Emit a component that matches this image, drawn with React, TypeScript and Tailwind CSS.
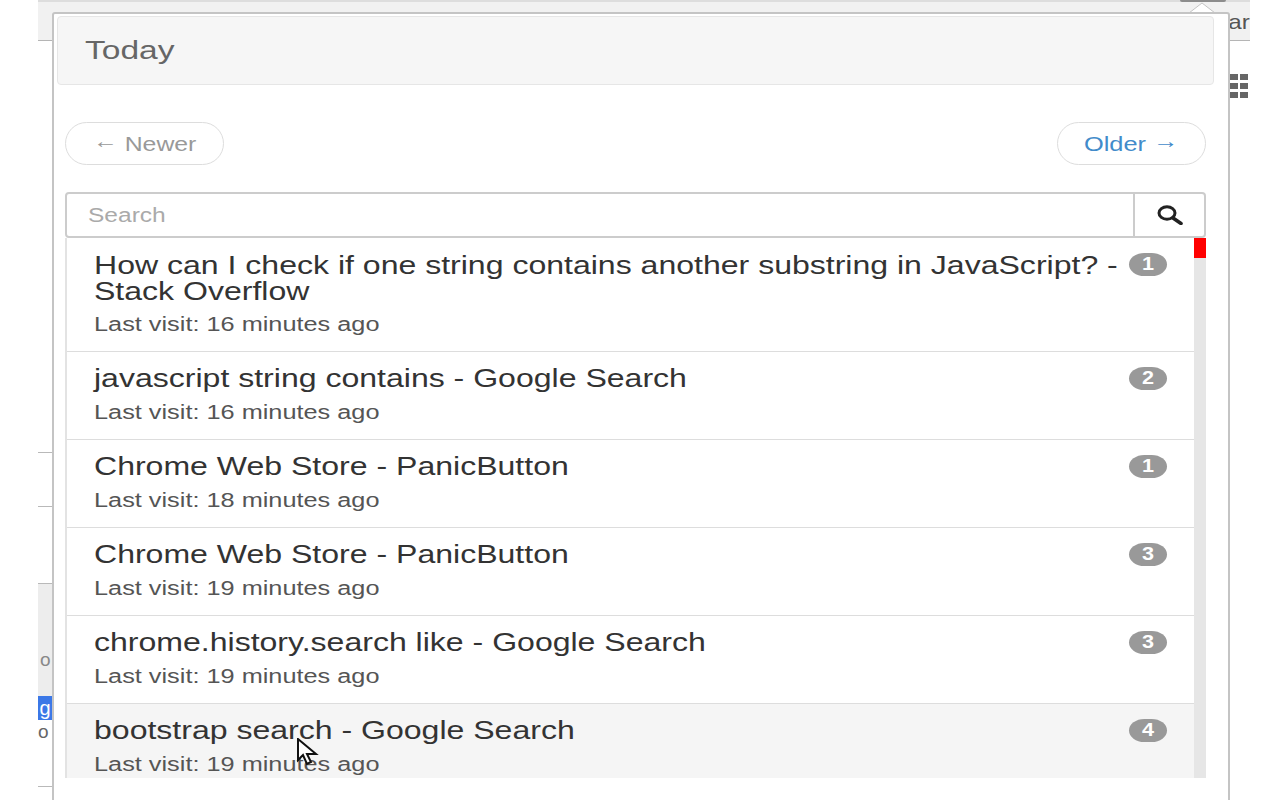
import React from "react";

interface HistoryItem {
  title: string;
  visit: string;
  count: number;
}

const items: HistoryItem[] = [
  {
    title: "How can I check if one string contains another substring in JavaScript? - Stack Overflow",
    visit: "Last visit: 16 minutes ago",
    count: 1,
  },
  { title: "javascript string contains - Google Search", visit: "Last visit: 16 minutes ago", count: 2 },
  { title: "Chrome Web Store - PanicButton", visit: "Last visit: 18 minutes ago", count: 1 },
  { title: "Chrome Web Store - PanicButton", visit: "Last visit: 19 minutes ago", count: 3 },
  { title: "chrome.history.search like - Google Search", visit: "Last visit: 19 minutes ago", count: 3 },
  { title: "bootstrap search - Google Search", visit: "Last visit: 19 minutes ago", count: 4 },
];

const App: React.FC = () => {
  return (
    <div className="relative h-[800px] w-[1280px] overflow-hidden bg-white font-['Liberation_Sans',sans-serif]">
      {/* page behind the popup */}
      <div className="mx-[38px] h-[800px] w-[1212px]">
        <div className="flex h-[41px] justify-end border-t-2 border-b border-t-[#dddddd] border-b-[#b5b5b5] bg-[#f1f1f1]">
          <span className="origin-right scale-x-[1.15] pt-[8px] text-[21px] leading-6 text-[#555555]">ar</span>
        </div>
        <div className="flex justify-end pt-[33px] pr-[2px]">
          <div className="grid grid-cols-2 gap-x-[2px] gap-y-[3px]">
            {[0, 1, 2, 3, 4, 5].map((i) => (
              <span key={i} className="h-[6px] w-[8px] bg-[#666666]" />
            ))}
          </div>
        </div>
        <div className="mt-[354px] w-[14px] border-t border-[#b9b9b9]" />
        <div className="mt-[53px] w-[14px] border-t border-[#b9b9b9]" />
        <div className="mt-[76px] h-[113px] w-[14px] overflow-hidden border-t border-[#b9b9b9] bg-[#ededed] text-[19px] leading-none text-[#888888]">
          <div className="pt-[66px] pl-[2px]">o</div>
        </div>
        <div className="h-[24px] w-[14px] overflow-hidden bg-[#3b78e7] text-center text-[20px] leading-6 text-white">g</div>
        <div className="h-[24px] w-[14px] overflow-hidden pt-[2px] text-[19px] leading-5 text-[#666666]">o</div>
        <div className="mt-[42px] w-[14px] border-t border-[#b9b9b9]" />
      </div>

      {/* popup arrow */}
      <svg className="absolute top-0 left-[1188px]" width="28" height="14" viewBox="0 0 28 14">
        <path d="M1 13 L14 3 L27 13" fill="#ffffff" stroke="#c4c4c4" strokeWidth="1" />
      </svg>
      <div className="absolute top-0 left-[1180px] h-[2px] w-[46px] rounded-b bg-[#8c8c8c]" />

      {/* popup */}
      <div className="absolute top-[12px] left-[52px] h-[800px] w-[1178px] rounded-t-[3px] border-2 border-[#c4c4c4] bg-white pt-[2px] pr-[14px] pl-[3px]">
        <div className="flex h-[69px] items-center rounded border border-[#e6e6e6] bg-[#f6f6f6] pl-[27px] text-[26px] text-[#666666]">
          <span className="inline-block origin-left scale-x-[1.29]">Today</span>
        </div>

        <div className="mt-[37px] flex justify-between px-[8px]">
          <span className="flex h-[43px] w-[159px] items-center justify-center rounded-full border border-[#dddddd] bg-white text-[20px] text-[#999999]">
            <span className="inline-block scale-x-[1.24]">
              <span className="inline-block -translate-y-[3px]">←</span> Newer
            </span>
          </span>
          <span className="flex h-[43px] w-[149px] items-center justify-center rounded-full border border-[#dddddd] bg-white text-[20px] text-[#428bca]">
            <span className="inline-block scale-x-[1.27]">
              Older <span className="inline-block -translate-y-[3px]">→</span>
            </span>
          </span>
        </div>

        <div className="mx-[8px] mt-[27px] flex h-[46px]">
          <div className="flex flex-1 items-center rounded-l border-2 border-[#cccccc] pl-[21px] text-[20px] text-[#aaaaaa]">
            <span className="inline-block origin-left scale-x-[1.226]">Search</span>
          </div>
          <div className="flex w-[71px] items-center justify-center rounded-r border-2 border-l-0 border-[#cccccc]">
            <svg width="26" height="20" viewBox="0 0 26 20" fill="none" stroke="#222222">
              <ellipse cx="10" cy="8" rx="8" ry="6.2" strokeWidth="3" />
              <path d="M16 13 L24 18.5" strokeWidth="3.6" strokeLinecap="round" />
            </svg>
          </div>
        </div>

        <div className="relative mx-[8px] flex h-[540px] overflow-hidden">
          <div className="flex-1 border-l-2 border-[#e3e3e3]">
            {items.map((item, i) => (
              <div
                key={i}
                className={`flex border-b border-[#dddddd] px-[27px] ${
                  i === 0 ? "h-[114px] pt-[14px]" : "h-[88px] pt-[13px]"
                } ${i === 5 ? "bg-[#f5f5f5]" : ""}`}
              >
                <div className="flex-1">
                  <div className="w-[860px] origin-left scale-x-[1.232] text-[26px] leading-[26px] text-[#333333]">
                    {item.title}
                  </div>
                  <div
                    className={`w-[300px] origin-left scale-x-[1.265] text-[20px] leading-[26px] text-[#555555] ${
                      i === 0 ? "mt-[7px]" : "mt-[8px]"
                    }`}
                  >
                    {item.visit}
                  </div>
                </div>
                <span
                  className={`ml-[10px] flex h-[23px] w-[38px] items-center justify-center rounded-[16px/12px] bg-[#999999] text-[18px] font-bold text-white ${
                    i === 0 ? "mt-[1px]" : "mt-[2px]"
                  }`}
                >
                  <span className="inline-block scale-x-[1.2]">{item.count}</span>
                </span>
              </div>
            ))}
          </div>
          <div className="w-[12px] bg-[#e6e6e6]">
            <div className="h-[20px] bg-[#ff0000]" />
          </div>
        </div>
      </div>

      {/* cursor */}
      <svg className="absolute top-[738px] left-[296px]" width="26" height="30" viewBox="0 0 26 30">
        <path d="M2 1 L2 22 L7 17 L11 26 L15 24 L11 16 L20 16 Z" fill="#ffffff" stroke="#111111" strokeWidth="2" />
      </svg>
    </div>
  );
};

export default App;
